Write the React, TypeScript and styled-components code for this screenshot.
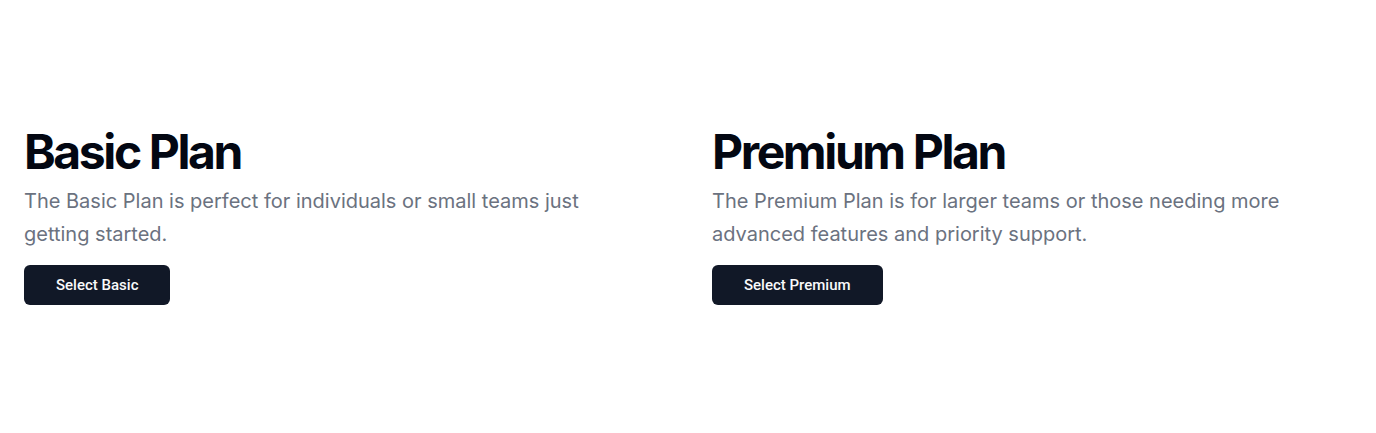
import React from "react";
import styled, { createGlobalStyle } from "styled-components";

const Global = createGlobalStyle`
  html, body { margin: 0; padding: 0; background: #ffffff; }
  body { font-family: Inter, "Noto Sans", sans-serif; }
  * { box-sizing: border-box; }
`;

const Page = styled.main`
  min-height: 433px;
  display: flex;
  align-items: center;
  padding: 0 24px;
`;

const Grid = styled.div`
  width: 100%;
  display: grid;
  grid-template-columns: 1fr 1fr;
  gap: 48px;
`;

const Plan = styled.section`
  display: flex;
  flex-direction: column;
  align-items: flex-start;
`;

const Title = styled.h2`
  margin: 0;
  font-family: Inter, sans-serif;
  font-size: 48px;
  line-height: 1;
  font-weight: 700;
  letter-spacing: -0.05em;
  color: #030712;
`;

const Description = styled.p`
  margin: 9px 0 0;
  max-width: 576px;
  font-family: Inter, sans-serif;
  font-size: 20px;
  line-height: 33px;
  color: #6b7280;
`;

const Button = styled.button`
  margin-top: 14px;
  height: 40px;
  padding: 0 32px;
  border: none;
  border-radius: 6px;
  background: #111827;
  color: #f9fafb;
  font-family: Roboto, "Liberation Sans", sans-serif;
  font-size: 15px;
  font-weight: 500;
  cursor: pointer;
`;

const plans = [
  {
    title: "Basic Plan",
    text: "The Basic Plan is perfect for individuals or small teams just getting started.",
    cta: "Select Basic",
  },
  {
    title: "Premium Plan",
    text: "The Premium Plan is for larger teams or those needing more advanced features and priority support.",
    cta: "Select Premium",
  },
];

export default function App() {
  return (
    <>
      <Global />
      <Page>
        <Grid>
          {plans.map((p) => (
            <Plan key={p.title}>
              <Title>{p.title}</Title>
              <Description>{p.text}</Description>
              <Button>{p.cta}</Button>
            </Plan>
          ))}
        </Grid>
      </Page>
    </>
  );
}
